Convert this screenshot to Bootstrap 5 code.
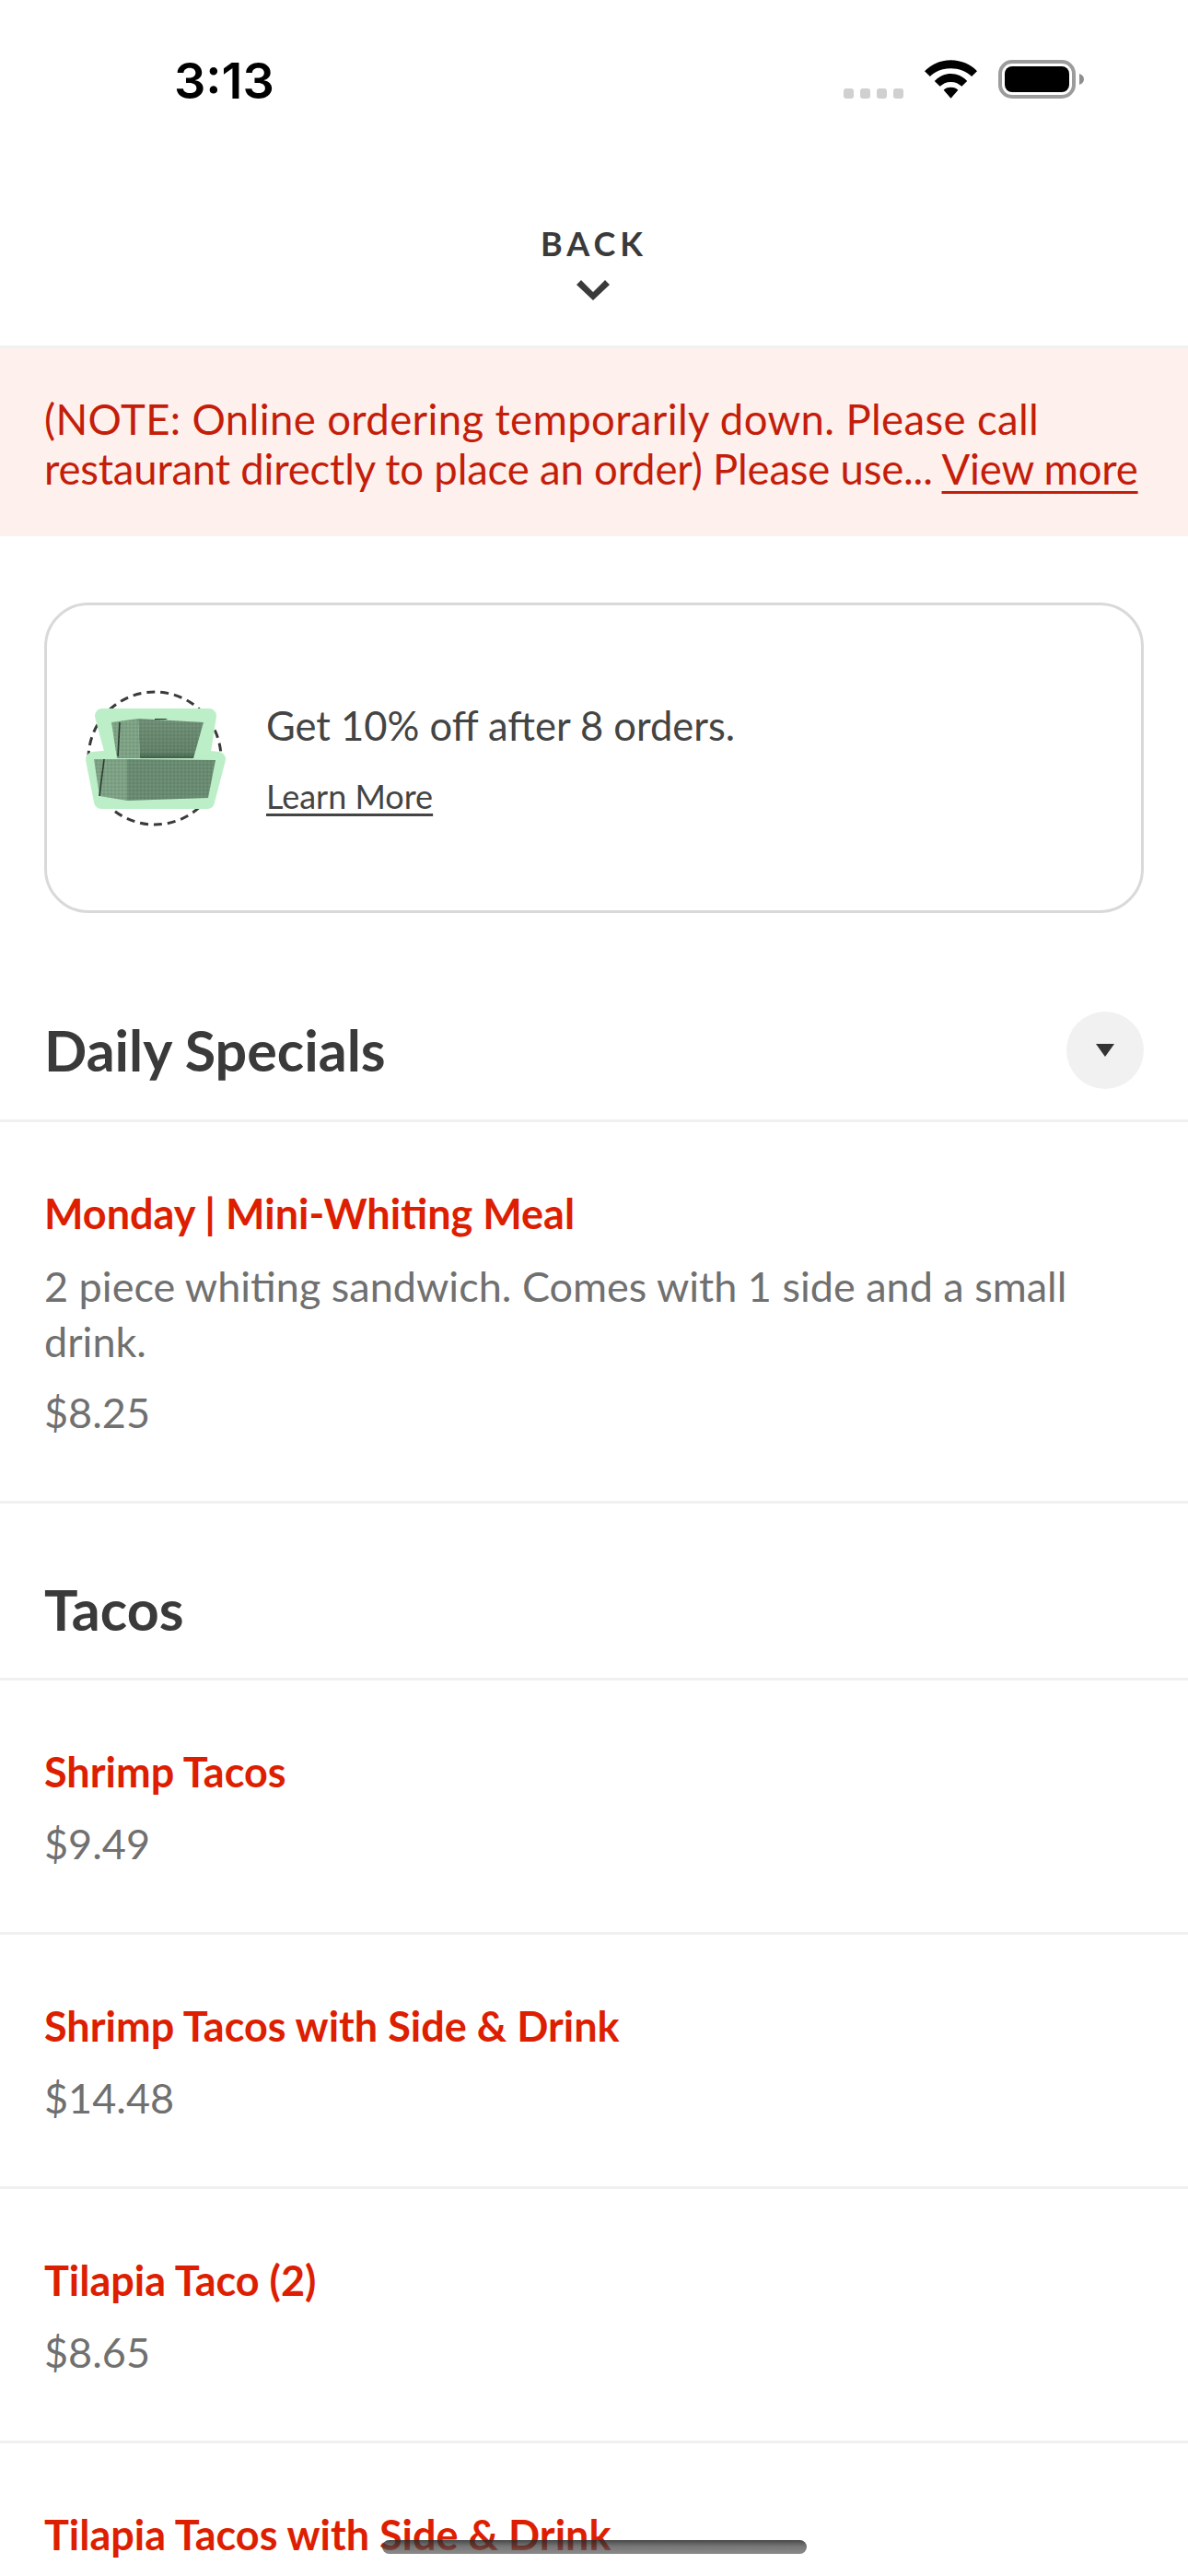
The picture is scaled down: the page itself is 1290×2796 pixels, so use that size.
<!DOCTYPE html>
<html lang="en">
<head>
  <meta charset="UTF-8">
  <meta name="viewport" content="width=device-width, initial-scale=1.0">
  <title>Menu</title>
  <link href="https://cdn.jsdelivr.net/npm/bootstrap@5.3.0/dist/css/bootstrap.min.css" rel="stylesheet">
  <style>
    html, body { height: 2796px; overflow: hidden; }
    body { font-family: Lato, "Liberation Sans", sans-serif; color: #3a3a3a; background: #fff; position: relative; }
    .status-bar { height: 192px; padding: 0 113px 0 189px; }
    .status-time { font-family: Inter, "Liberation Sans", sans-serif; font-size: 54px; font-weight: 600; color: #000; line-height: 1; padding-top: 61px; }
    .status-icons { padding-top: 65px; gap: 23px; }
    .signal-dots { margin-top: 31px; }
    .back-bar { height: 186px; border-bottom: 3px solid #f1f1f3; }
    .back-label { font-size: 36px; font-weight: 700; letter-spacing: 5px; line-height: 1; margin-top: 54px; }
    .back-chevron { margin-top: 22px; margin-right: 2px; }
    .note-banner { background: #fef0ec; color: #c41e0a; height: 204px; padding: 50px 48px 0; font-size: 45.5px; line-height: 54px; white-space: nowrap; }
    .note-banner a { color: inherit; text-underline-offset: 7px; text-decoration-thickness: 3px; }
    .note-first { letter-spacing: .36px; }
    .note-second { letter-spacing: -.2px; }
    .reward-card { margin: 72px 48px 0; height: 337px; border: 3px solid #d9d9d9; border-radius: 48px; padding-left: 39px; }
    .reward-art { margin-right: 39px; }
    .reward-title { font-size: 43.5px; line-height: 50px; margin-top: 2px; color: #444; }
    .reward-link { font-size: 36px; color: #444; display: inline-block; margin-top: 30px; line-height: 44px; text-underline-offset: 5px; }
    .section-head { padding: 0 48px; border-bottom: 3px solid #f0f0f0; }
    .section-name { font-size: 61px; font-weight: 700; margin: 0; line-height: 72px; }
    .specials-head { height: 227px; padding-top: 113px; }
    .tacos-head { height: 192px; padding-top: 79px; }
    .drop-btn { width: 84px; height: 84px; background: #f1f1f1; border-radius: 50%; margin-top: -6px; }
    .drop-arrow { width: 0; height: 0; border-left: 10px solid transparent; border-right: 10px solid transparent; border-top: 14px solid #333; }
    .menu-row { padding: 72px 48px 0; border-bottom: 3px solid #f0f0f0; height: 276px; }
    .menu-row.tall { height: 414px; }
    .menu-name { font-size: 45px; font-weight: 700; color: #dd1e00; line-height: 54px; margin: 0; }
    .menu-desc { font-size: 45px; color: #707070; line-height: 60px; margin: 22px 0 0; }
    .menu-price { font-size: 45px; color: #707070; line-height: 54px; margin: 24px 0 0; }
    .menu-desc + .menu-price { margin-top: 20px; }
    .home-bar { position: absolute; left: 415px; top: 2757px; width: 461px; height: 15px; border-radius: 8px; background: linear-gradient(180deg, rgba(40,40,40,.85), rgba(60,60,60,.7) 45%, rgba(110,110,110,.8)); }
  </style>
</head>
<body>
  <div class="status-bar d-flex justify-content-between">
    <div class="status-time">3:13</div>
    <div class="status-icons d-flex align-items-start">
      <svg class="signal-dots" width="65" height="11" viewBox="0 0 65 11"><g fill="#d0d0d0"><rect x="0" y="0" width="11" height="11" rx="3"/><rect x="18" y="0" width="11" height="11" rx="3"/><rect x="36" y="0" width="11" height="11" rx="3"/><rect x="54" y="0" width="11" height="11" rx="3"/></g></svg>
      <svg width="57" height="42" viewBox="1 0 58 42"><path fill="#000" d="M30 0C18 0 8 5 1 12l6 6c6-6 14-9 23-9s17 3 23 9l6-6C52 5 42 0 30 0zM30 15c-7 0-13 3-18 8l6 6c3-3 7-5 12-5s9 2 12 5l6-6c-5-5-11-8-18-8zM30 30c-4 0-6 1-8 3l8 9 8-9c-2-2-4-3-8-3z"/></svg>
      <svg width="93" height="42" viewBox="0 0 93 42"><rect x="2" y="2" width="80" height="38" rx="13" fill="none" stroke="#9c9c9c" stroke-width="4"/><rect x="7" y="7" width="70" height="28" rx="8" fill="#000"/><path d="M88 15c3 1 5 3 5 6s-2 5-5 6z" fill="#8e8e8e"/></svg>
    </div>
  </div>

  <div class="back-bar d-flex flex-column align-items-center">
    <div class="back-label">BACK</div>
    <svg class="back-chevron" width="36" height="22" viewBox="0 0 36 22"><path d="M0 5L5 0l13 13L31 0l5 5-18 17z" fill="#3a3a3a"/></svg>
  </div>

  <div class="note-banner"><span class="note-first">(NOTE: Online ordering temporarily down. Please call</span><br><span class="note-second">restaurant directly to place an order) Please use... <a href="#">View more</a></span></div>

  <div class="reward-card d-flex align-items-center">
    <svg class="reward-art flex-shrink-0" width="160" height="160" viewBox="90 742 160 160">
      <defs>
        <pattern id="grain" width="4" height="4" patternUnits="userSpaceOnUse"><circle cx="1" cy="1" r=".8" fill="#4d6f56" opacity=".45"/><circle cx="3" cy="3" r=".7" fill="#a9c4ad" opacity=".35"/></pattern>
        <linearGradient id="boxTop" x1="0" y1="0" x2="0" y2="1"><stop offset="0" stop-color="#6f8d75"/><stop offset=".85" stop-color="#5f7f66"/><stop offset="1" stop-color="#3f5c46"/></linearGradient>
        <filter id="soft"><feGaussianBlur stdDeviation=".6"/></filter>
      </defs>
      <circle cx="168" cy="822" r="72" fill="none" stroke="#3a3a3a" stroke-width="3" stroke-dasharray="9 6"/>
      <path d="M111 776H227L220 821L237 823L225 869H110L101 823L123 821z" fill="#bcefc8" stroke="#bcefc8" stroke-width="16" stroke-linejoin="round"/>
      <g filter="url(#soft)">
        <path d="M121 783L150 779L152 822H127z" fill="#7ea285"/>
        <path d="M150 779L221 783L210 822H152z" fill="url(#boxTop)"/>
        <path d="M168 779h12l2 1h-14z" fill="#27352b"/>
        <path d="M130 783L128 820" stroke="#27352b" stroke-width="1.6" fill="none"/>
        <path d="M102 823H138V868L108 863z" fill="#7ea285"/>
        <path d="M138 823L234 824L226 865L138 868z" fill="#688a70"/>
        <path d="M113 823L108 863" stroke="#27352b" stroke-width="1.6" fill="none"/>
        <path d="M102 823L234 824L226 865L138 868L108 863z M121 783L150 779L221 783L210 822H127z" fill="url(#grain)"/>
      </g>
    </svg>
    <div>
      <div class="reward-title">Get 10% off after 8 orders.</div>
      <a class="reward-link" href="#">Learn More</a>
    </div>
  </div>

  <div class="section-head specials-head d-flex justify-content-between">
    <h2 class="section-name">Daily Specials</h2>
    <div class="drop-btn d-flex align-items-center justify-content-center"><div class="drop-arrow"></div></div>
  </div>
  <div class="menu-row tall">
    <p class="menu-name">Monday | Mini-Whiting Meal</p>
    <p class="menu-desc">2 piece whiting sandwich. Comes with 1 side and a small drink.</p>
    <p class="menu-price">$8.25</p>
  </div>

  <div class="section-head tacos-head">
    <h2 class="section-name">Tacos</h2>
  </div>
  <div class="menu-row">
    <p class="menu-name">Shrimp Tacos</p>
    <p class="menu-price">$9.49</p>
  </div>
  <div class="menu-row">
    <p class="menu-name">Shrimp Tacos with Side &amp; Drink</p>
    <p class="menu-price">$14.48</p>
  </div>
  <div class="menu-row">
    <p class="menu-name">Tilapia Taco (2)</p>
    <p class="menu-price">$8.65</p>
  </div>
  <div class="menu-row">
    <p class="menu-name">Tilapia Tacos with Side &amp; Drink</p>
  </div>

  <div class="home-bar"></div>
  <script src="https://cdn.jsdelivr.net/npm/bootstrap@5.3.0/dist/js/bootstrap.bundle.min.js"></script>
</body>
</html>
